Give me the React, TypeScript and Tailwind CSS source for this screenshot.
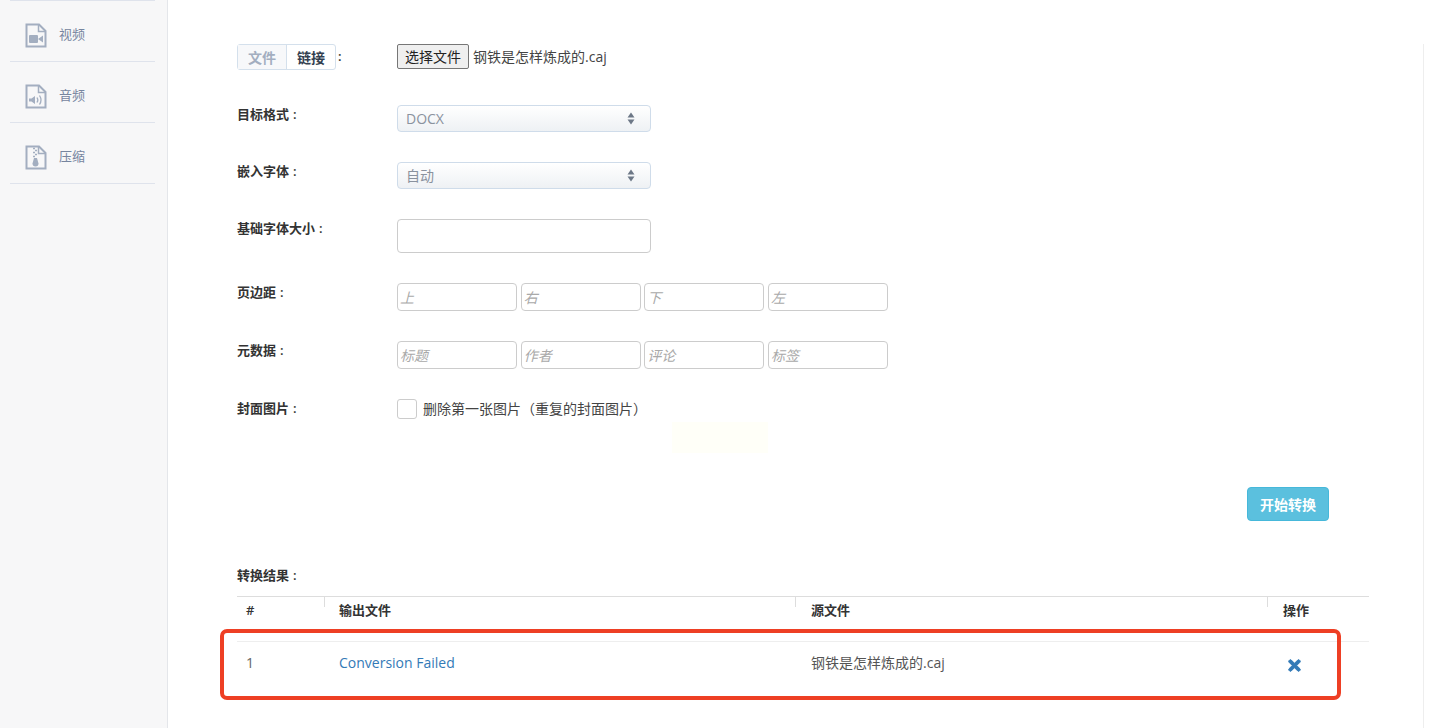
import React from 'react'
import { FaTimes } from 'react-icons/fa'

const font = '[font-family:"Open_Sans","Noto_Sans_CJK_SC",sans-serif]'

function DocIcon({ children }: { children: React.ReactNode }) {
    return (
        <svg width="22" height="25" viewBox="0 0 22 25" fill="none" className="shrink-0">
            <path d="M2 1.5H14L20.5 8V23.5H1.5V1.5Z" fill="#f7f7f8" stroke="#a3aec0" strokeWidth="2" />
            <path d="M13.5 1.5V8.5H20.5" stroke="#a3aec0" strokeWidth="1.5" />
            {children}
        </svg>
    )
}

const videoIcon = (
    <>
        <rect x="4" y="12" width="9" height="8" rx="1" fill="#a3aec0" />
        <path d="M13 16L18 12.5V19.5Z" fill="#a3aec0" />
    </>
)

const audioIcon = (
    <>
        <path d="M4 14.5H6.5L10 12V20L6.5 17.5H4Z" fill="#a3aec0" />
        <path d="M12 13.5C13 15 13 17 12 18.5" stroke="#a3aec0" strokeWidth="1.3" />
        <path d="M14.5 11.5C16.5 14.5 16.5 17.5 14.5 20.5" stroke="#a3aec0" strokeWidth="1.3" />
    </>
)

const zipIcon = (
    <>
        <path d="M8 3.5H10M10 5.5H12M8 7.5H10M10 9.5H12M8 11.5H10" stroke="#a3aec0" strokeWidth="1.3" />
        <path d="M9 13H12L13.5 18.5A3 3 0 0 1 7.5 18.5Z" fill="#a3aec0" />
    </>
)

function SideItem({ icon, label }: { icon: React.ReactNode; label: string }) {
    return (
        <div className="h-[61px] border-b border-[#dfe3ec] flex items-center pl-[15px] pt-[8px] gap-[12px]">
            <DocIcon>{icon}</DocIcon>
            <span className="text-[13px] text-[#76859f]">{label}</span>
        </div>
    )
}

function FakeSelect({ value }: { value: string }) {
    return (
        <div className="w-[254px] h-[27px] rounded-[4px] border border-[#cfdcea] bg-gradient-to-b from-white to-[#eef1f4] flex items-center justify-between pl-[8px] pr-[15px] text-[14px] text-[#8a929e]">
            <span>{value}</span>
            <svg width="8" height="13" viewBox="0 0 8 13">
                <path d="M4 0.5L7.5 5.5H0.5Z" fill="#6d7887" />
                <path d="M4 12.5L7.5 7.5H0.5Z" fill="#6d7887" />
            </svg>
        </div>
    )
}

function Label({ text }: { text: string }) {
    return (
        <div className="w-[160px] shrink-0 text-[13px] font-semibold text-[#333] leading-[18px]">
            {text}
            <span className="ml-[4px]">:</span>
        </div>
    )
}

function SmallInput({ placeholder }: { placeholder: string }) {
    return (
        <div className="w-[120px] h-[28px] rounded-[4px] border border-[#ccc] bg-white flex items-center pl-[2px] pt-[1px] text-[14px] italic text-[#a9a9a9]">
            {placeholder}
        </div>
    )
}

function App() {
    return (
        <div className={`${font} h-[728px] w-[1437px] overflow-hidden bg-white flex`}>
            <aside className="w-[168px] shrink-0 bg-[#f7f7f8] border-r border-[#e4e6ea] px-[10px]">
                <div className="w-[145px] border-t border-[#dfe3ec]">
                    <SideItem icon={videoIcon} label="视频" />
                    <SideItem icon={audioIcon} label="音频" />
                    <SideItem icon={zipIcon} label="压缩" />
                </div>
            </aside>

            <main className="flex-1 pl-[69px] pr-[13px] pt-[44px]">
                <div className="relative h-[684px] border-r border-[#eeeeee] pr-[54px]">
                    {/* file / link row */}
                    <div className="flex h-[27px] items-start">
                        <div className="w-[160px] shrink-0 flex items-center">
                            <div className="flex h-[26px] rounded-[3px] border border-[#d4e0ec] text-[14px] font-semibold">
                                <span className="w-[49px] flex items-center justify-center border-r border-[#d4e0ec] bg-[#f7f8fa] text-[#a3aec0]">文件</span>
                                <span className="w-[48px] flex items-center justify-center text-[#333f50]">链接</span>
                            </div>
                            <span className="ml-[2px] text-[13px] font-semibold text-[#333]">:</span>
                        </div>
                        <button className="h-[25px] w-[72px] rounded-[2px] border border-[#767676] bg-[#efefef] text-[14px] text-[#222]">选择文件</button>
                        <span className="ml-[4px] text-[14px] leading-[26px] text-[#444]">钢铁是怎样炼成的.caj</span>
                    </div>

                    <div className="flex mt-[34px]">
                        <Label text="目标格式" />
                        <FakeSelect value="DOCX" />
                    </div>

                    <div className="flex mt-[30px]">
                        <Label text="嵌入字体" />
                        <FakeSelect value="自动" />
                    </div>

                    <div className="flex mt-[30px]">
                        <Label text="基础字体大小" />
                        <div className="w-[254px] h-[34px] rounded-[4px] border border-[#ccc] bg-white" />
                    </div>

                    <div className="flex mt-[30px]">
                        <Label text="页边距" />
                        <div className="flex gap-[3.67px]">
                            <SmallInput placeholder="上" />
                            <SmallInput placeholder="右" />
                            <SmallInput placeholder="下" />
                            <SmallInput placeholder="左" />
                        </div>
                    </div>

                    <div className="flex mt-[30px]">
                        <Label text="元数据" />
                        <div className="flex gap-[3.67px]">
                            <SmallInput placeholder="标题" />
                            <SmallInput placeholder="作者" />
                            <SmallInput placeholder="评论" />
                            <SmallInput placeholder="标签" />
                        </div>
                    </div>

                    <div className="flex mt-[30px] h-[20px] items-start">
                        <Label text="封面图片" />
                        <div className="w-[20px] h-[20px] rounded-[3px] border border-[#ccc] bg-white" />
                        <span className="ml-[6px] text-[14px] leading-[20px] text-[#444]">删除第一张图片（重复的封面图片）</span>
                    </div>

                    <div className="ml-[435px] mt-[3px] w-[96px] h-[31px] bg-[#fffff8]" />

                    <div className="flex justify-end mt-[34px] pr-[40px]">
                        <button className="w-[82px] h-[34px] rounded-[4px] border border-[#46b8da] bg-[#5bc0de] text-[14px] font-semibold text-white">开始转换</button>
                    </div>

                    <div className="mt-[44px] text-[13px] font-semibold text-[#333] leading-[20px]">
                        转换结果<span className="ml-[4px]">:</span>
                    </div>

                    <div className="relative mt-[11px] text-[13px]">
                        <div className="grid grid-cols-[87px_471px_472px_1fr] h-[45px] border-t border-[#dddddd] font-semibold text-[#333]">
                            <div className="pl-[9px] pt-[4px]">
                                #
                            </div>
                            <div className="relative pl-[15px] pt-[4px]">
                                <span className="absolute left-0 top-0 h-[10px] border-l border-[#dddddd]" />
                                输出文件
                            </div>
                            <div className="relative pl-[16px] pt-[4px]">
                                <span className="absolute left-0 top-0 h-[10px] border-l border-[#dddddd]" />
                                源文件
                            </div>
                            <div className="relative pl-[16px] pt-[4px]">
                                <span className="absolute left-0 top-0 h-[10px] border-l border-[#dddddd]" />
                                操作
                            </div>
                        </div>
                        <div className="grid grid-cols-[87px_471px_472px_1fr] h-[52px] border-t border-[#eeeeee] items-start pt-[11px] text-[14px] leading-[20px] text-[#666]">
                            <div className="pl-[9px]">1</div>
                            <div className="pl-[15px] text-[#337ab7]">Conversion Failed</div>
                            <div className="pl-[16px] text-[#555]">钢铁是怎样炼成的.caj</div>
                            <div className="pl-[19px] pt-[4px] text-[#337ab7] text-[17px]"><FaTimes stroke="currentColor" strokeWidth={30} /></div>
                        </div>
                        {/* red annotation box */}
                        <div className="absolute left-[-17px] top-[33px] w-[1121px] h-[71px] rounded-[7px] border-[4px] border-[#ee3f24]" />
                    </div>
                </div>
            </main>
        </div>
    )
}

export default App
